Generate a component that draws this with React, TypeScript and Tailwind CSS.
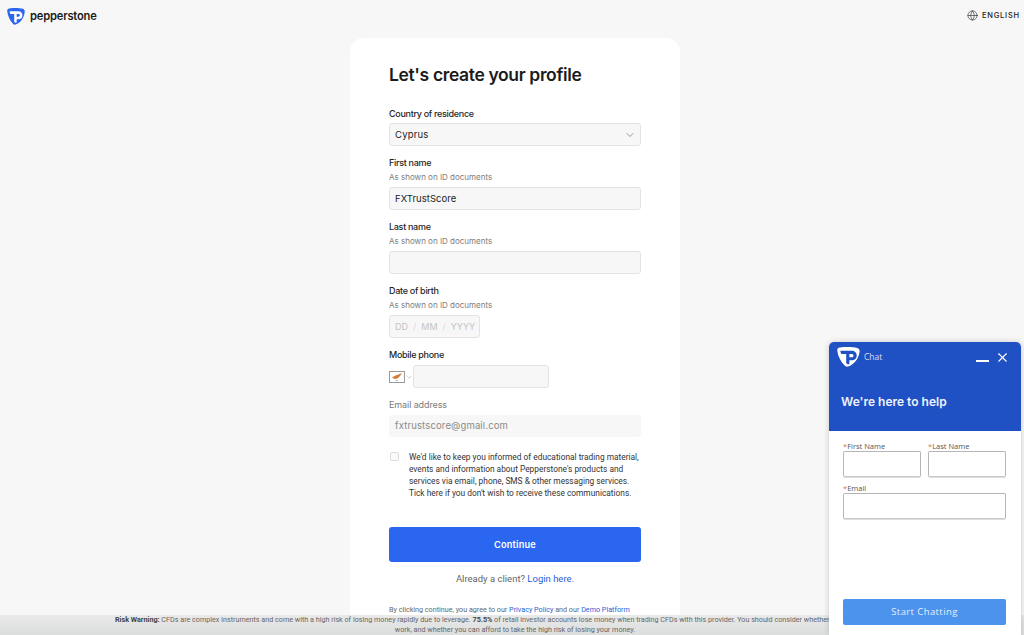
import React from "react";
import { ChevronDown, Globe, X } from "lucide-react";

const PLogo = ({ bg, fg, w, h }: { bg: string; fg: string; w: number; h: number }) => (
  <svg width={w} height={h} viewBox="0 0 24 21" preserveAspectRatio="none" className="shrink-0">
    <path
      d="M3 0.5 C10 -0.2 17 0 21 1 C23 1.5 24 3 23.5 5.5 C22.5 12 18 18.5 11.5 20.5 C10 21 9 20.5 8 19.5 C4 15.5 1 10 0.3 4 C0 2 1 0.8 3 0.5 Z"
      fill={bg}
    />
    <path
      d="M3.4 4 H15.2 C18.6 4 20.6 6.2 20.6 9 C20.6 12 18.4 14 15.2 14 H12.9 V18 C11.6 18.4 10.6 18 9.6 17 V7.4 H4.4 C4 6.4 3.6 5.2 3.4 4 Z M12.9 7.4 V10.8 H15 C16.4 10.8 17.2 10.1 17.2 9.1 C17.2 8.1 16.4 7.4 15 7.4 Z"
      fill={fg}
      fillRule="evenodd"
    />
  </svg>
);

const Hint = () => (
  <p className="text-[8px] leading-[12px] text-[#7c7c7c] mt-[2px]">As shown on ID documents</p>
);

const Label = ({ children }: { children: React.ReactNode }) => (
  <p className="text-[9px] leading-[12px] font-medium tracking-[-0.3px] text-[#1f1f1f]">{children}</p>
);

const inputBox = "h-[23px] rounded-[3px] border border-[#e3e3e3] bg-[#f7f7f7]";

const App: React.FC = () => {
  return (
    <div className="h-screen overflow-hidden relative bg-[#f7f7f7] font-['Inter',sans-serif]">
      {/* Header */}
      <header className="h-[38px] flex items-start justify-between pl-[7px] pr-[4px] pt-[8px]">
        <div className="flex items-center gap-[5px]">
          <PLogo bg="#2b66f0" fg="#ffffff" w={18} h={17} />
          <span className="text-[11.2px] font-semibold tracking-[-0.2px] text-[#1b1b1b]">pepperstone</span>
        </div>
        <div className="flex items-center gap-[4px] pt-[2px]">
          <Globe size={11} strokeWidth={1.3} className="text-[#222222]" />
          <span className="text-[7.5px] font-medium tracking-[0.8px] text-[#222222]">ENGLISH</span>
        </div>
      </header>

      {/* Form card */}
      <main className="w-[330px] ml-[350px] bg-white rounded-t-[14px] pt-[26px] px-[39px] h-[600px]">
        <h1 className="text-[17.5px] leading-[22px] font-semibold tracking-[-0.36px] text-[#1b1b1b]">
          Let's create your profile
        </h1>

        <div className="mt-[22px]">
          <Label>Country of residence</Label>
          <div className={`${inputBox} mt-[3px] flex items-center justify-between pl-[5px] pr-[4px] pt-[1px]`}>
            <span className="text-[9.5px] tracking-[0.2px] text-[#222222]">Cyprus</span>
            <ChevronDown size={12} strokeWidth={1.2} className="text-[#555555]" />
          </div>
        </div>

        <div className="mt-[11px]">
          <Label>First name</Label>
          <Hint />
          <div className={`${inputBox} mt-[4px] flex items-center pl-[5px] pt-[1px]`}>
            <span className="text-[9.5px] tracking-[0.05px] text-[#222222]">FXTrustScore</span>
          </div>
        </div>

        <div className="mt-[11px]">
          <Label>Last name</Label>
          <Hint />
          <div className={`${inputBox} mt-[4px]`} />
        </div>

        <div className="mt-[11px]">
          <Label>Date of birth</Label>
          <Hint />
          <div className={`${inputBox} mt-[4px] w-[91px] flex items-center gap-[5px] pl-[5px] text-[9px] text-[#c4c4c4]`}>
            <span>DD</span>
            <span className="text-[#dddddd]">/</span>
            <span>MM</span>
            <span className="text-[#dddddd]">/</span>
            <span>YYYY</span>
          </div>
        </div>

        <div className="mt-[11px]">
          <Label>Mobile phone</Label>
          <div className="mt-[4px] flex items-center">
            <svg width="16" height="12" viewBox="0 0 16 12" className="shrink-0">
              <rect x="0.5" y="0.5" width="15" height="11" fill="#ffffff" stroke="#9a9a9a" />
              <path d="M3 6.6 L6.5 4.6 L10 3.2 L13 2 L11 5 L8.5 7.6 L5.5 8 Z" fill="#d57b36" />
              <path d="M6.5 9.6 H9" stroke="#7d9a72" strokeWidth="0.6" />
            </svg>
            <ChevronDown size={8} strokeWidth={1.2} className="text-[#8a8a8a] shrink-0" />
            <div className={`${inputBox} w-[136px]`} />
          </div>
        </div>

        <div className="mt-[11px]">
          <p className="text-[9px] leading-[12px] tracking-[-0.1px] text-[#7c7c7c]">Email address</p>
          <div className="h-[22px] mt-[4px] rounded-[3px] bg-[#f7f7f7] flex items-center pl-[6px]">
            <span className="text-[9.5px] tracking-[0.15px] text-[#8a8a8a]">fxtrustscore@gmail.com</span>
          </div>
        </div>

        <div className="mt-[14px] flex items-start">
          <div className="w-[9px] h-[9px] mt-[1px] ml-[1px] rounded-[2px] border border-[#dcdcdc] bg-[#fafafa] shrink-0" />
          <p className="ml-[10px] font-['Roboto',sans-serif] text-[8.35px] leading-[12px] text-[#333333] whitespace-nowrap">
            We'd like to keep you informed of educational trading material,
            <br />
            events and information about Pepperstone's products and
            <br />
            services via email, phone, SMS &amp; other messaging services.
            <br />
            Tick here if you don't wish to receive these communications.
          </p>
        </div>

        <button className="mt-[28px] w-full h-[35px] rounded-[3px] bg-[#2b66f0] text-white text-[9.2px] font-semibold tracking-[0.2px]">
          Continue
        </button>

        <p className="mt-[11px] text-center font-['Roboto',sans-serif] text-[9.5px] leading-[12px] text-[#666666]">
          Already a client? <span className="text-[#1f5fd8]">Login here.</span>
        </p>

        <p className="mt-[19px] font-['Roboto',sans-serif] text-[7.2px] leading-[12px] text-[#666666] whitespace-nowrap">
          By clicking continue, you agree to our <span className="text-[#1f5fd8]">Privacy Policy</span> and our{" "}
          <span className="text-[#1f5fd8]">Demo Platform</span>
        </p>
      </main>

      {/* Risk warning, fixed over the page bottom */}
      <div className="absolute left-0 right-0 bottom-0 h-[20px] bg-gradient-to-b from-[#e9e9e9] to-[#dcdddd] font-['Roboto',sans-serif] text-[7.2px] leading-[10px] text-[#666666]">
        <div className="pl-[115px] whitespace-nowrap">
          <b className="text-[#444444]">Risk Warning:</b> CFDs are complex instruments and come with a high risk of
          losing money rapidly due to leverage. <b className="text-[#444444]">75.5%</b> of retail investor accounts lose
          money when trading CFDs with this provider. You should consider whether
        </div>
        <div className="w-[800px] ml-[115px] text-center">
          work, and whether you can afford to take the high risk of losing your money.
        </div>
      </div>

      {/* Chat widget */}
      <div className="absolute right-[3px] bottom-0 w-[192px] h-[293px] rounded-t-[5px] bg-white shadow-[0_0_6px_rgba(0,0,0,0.18)] flex flex-col font-['Open_Sans',sans-serif]">
        <div className="h-[89px] bg-[#1f51c4] rounded-t-[5px] pl-[8px] pr-[8px] pt-[3px] text-white">
          <div className="flex items-center h-[24px]">
            <PLogo bg="#ffffff" fg="#1f51c4" w={23} h={20} />
            <span className="ml-[4px] text-[8.5px] text-[#d5def5]">Chat</span>
            <div className="ml-auto flex items-center gap-[6px] pr-[3px]">
              <span className="w-[13px] h-[2px] bg-white mt-[8px]" />
              <X size={15} strokeWidth={1.7} />
            </div>
          </div>
          <p className="mt-[24px] ml-[4px] text-[12px] font-semibold font-['Inter',sans-serif] text-[#eef2fc]">
            We're here to help
          </p>
        </div>
        <div className="flex-1 flex flex-col pl-[14px] pr-[15px] pb-[10px] pt-[10px]">
          <div className="flex gap-[7px]">
            <div className="flex-1">
              <p className="text-[7.5px] leading-[10px] text-[#555555]"><span className="text-[#d57b36]">*</span>First Name</p>
              <div className="h-[26px] rounded-[2px] border border-[#b5b5b5] border-b-[#c9c9c9] shadow-[0_1px_0_#dddddd]" />
            </div>
            <div className="flex-1">
              <p className="text-[7.5px] leading-[10px] text-[#555555]"><span className="text-[#d57b36]">*</span>Last Name</p>
              <div className="h-[26px] rounded-[2px] border border-[#b5b5b5] border-b-[#c9c9c9] shadow-[0_1px_0_#dddddd]" />
            </div>
          </div>
          <p className="mt-[6px] text-[7.5px] leading-[10px] text-[#555555]"><span className="text-[#d57b36]">*</span>Email</p>
          <div className="h-[26px] rounded-[2px] border border-[#b5b5b5] border-b-[#c9c9c9] shadow-[0_1px_0_#dddddd]" />
          <button className="mt-auto h-[26px] rounded-[2px] bg-[#4b93ec] text-[9.5px] tracking-[0.4px] text-[#e6f0fc]">
            Start Chatting
          </button>
        </div>
      </div>
    </div>
  );
};

export default App;
